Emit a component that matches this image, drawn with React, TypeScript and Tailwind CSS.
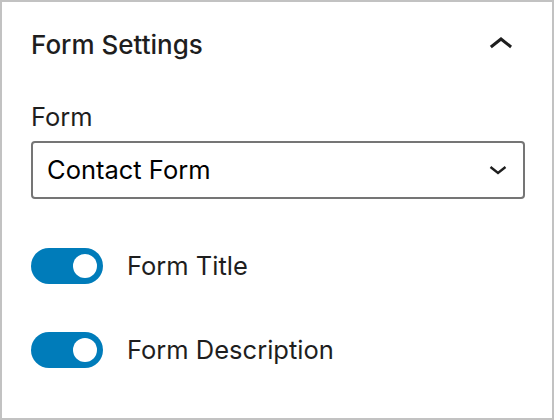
import React from 'react';

function ChevronUp() {
    return (
        <svg width="48" height="48" viewBox="0 0 24 24" className="text-[#1e1e1e]">
            <path d="M6.5 12.4L12 8l5.5 4.4-.9 1.2L12 10l-4.6 3.6-1-1.2z" fill="currentColor" />
        </svg>
    );
}

function ChevronDown() {
    return (
        <svg width="18" height="10" viewBox="0 0 18 10" fill="none">
            <path d="M1.5 2L9 8l7.5-6" stroke="#1e1e1e" strokeWidth="2.4" />
        </svg>
    );
}

function Toggle({ label }: { label: string }) {
    return (
        <div className="flex items-center h-[36px]">
            <div className="relative w-[72px] h-[36px] rounded-full bg-[#007cba] shrink-0">
                {/* knob */}
                <span className="absolute right-[6px] top-[6px] w-[24px] h-[24px] rounded-full bg-white" />
            </div>
            <span className="ml-[24px] text-[25.5px] leading-[36px] text-[#1e1e1e]">{label}</span>
        </div>
    );
}

export default function App() {
    return (
        <div
            className="w-[554px] h-[420px] border-2 border-[#c2c2c2] bg-white pl-[29px] pr-[27px]"
            style={{ fontFamily: 'Inter, "Noto Sans", sans-serif' }}
        >
            {/* Panel header */}
            <div className="flex items-center justify-between h-[86px]">
                <h2 className="text-[26px] font-medium text-[#1e1e1e] leading-none">Form Settings</h2>
                <ChevronUp />
            </div>

            {/* Form select */}
            <div className="mt-[14px]">
                <label className="block text-[25.5px] leading-[30px] text-[#1e1e1e]">Form</label>
                <div className="mt-[9px] h-[58px] border-2 border-[#757575] rounded-[4px] flex items-center justify-between pl-[14px] pr-[16px]">
                    <span className="text-[25.5px] text-black">Contact Form</span>
                    <ChevronDown />
                </div>
            </div>

            {/* Toggles */}
            <div className="mt-[49px] flex flex-col gap-[48px]">
                <Toggle label="Form Title" />
                <Toggle label="Form Description" />
            </div>
        </div>
    );
}
